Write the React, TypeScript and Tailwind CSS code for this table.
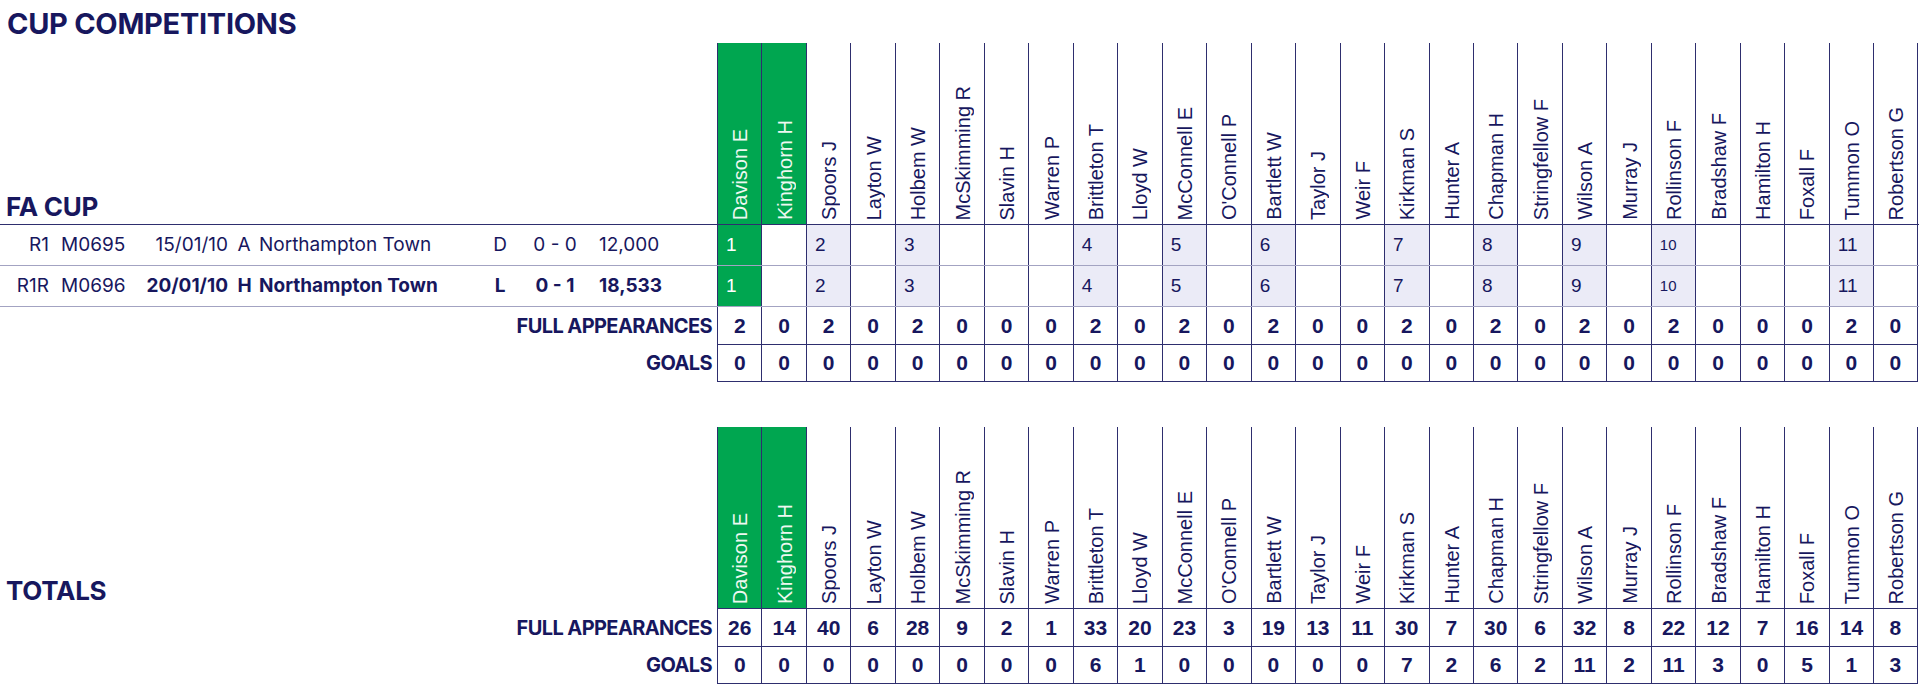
const PLAYERS = [
  'Davison E',
  'Kinghorn H',
  'Spoors J',
  'Layton W',
  'Holbem W',
  'McSkimming R',
  'Slavin H',
  'Warren P',
  'Brittleton T',
  'Lloyd W',
  'McConnell E',
  "O'Connell P",
  'Bartlett W',
  'Taylor J',
  'Weir F',
  'Kirkman S',
  'Hunter A',
  'Chapman H',
  'Stringfellow F',
  'Wilson A',
  'Murray J',
  'Rollinson F',
  'Bradshaw F',
  'Hamilton H',
  'Foxall F',
  'Tummon O',
  'Robertson G',
];

// column index -> shirt number, same line-up in both ties
const SHIRTS: Record<number, number> = { 0: 1, 2: 2, 4: 3, 8: 4, 10: 5, 12: 6, 15: 7, 17: 8, 19: 9, 21: 10, 25: 11 };

const CUP_APPS = [2, 0, 2, 0, 2, 0, 0, 0, 2, 0, 2, 0, 2, 0, 0, 2, 0, 2, 0, 2, 0, 2, 0, 0, 0, 2, 0];
const CUP_GOALS = PLAYERS.map(() => 0);
const TOTAL_APPS = [26, 14, 40, 6, 28, 9, 2, 1, 33, 20, 23, 3, 19, 13, 11, 30, 7, 30, 6, 32, 8, 22, 12, 7, 16, 14, 8];
const TOTAL_GOALS = [0, 0, 0, 0, 0, 0, 0, 0, 6, 1, 0, 0, 0, 0, 0, 7, 2, 6, 2, 11, 2, 11, 3, 0, 5, 1, 3];

interface Match {
  round: string;
  code: string;
  date: string;
  venue: string;
  opponent: string;
  result: string;
  score: string;
  crowd: string;
  bold?: boolean;
}

const MATCHES: Match[] = [
  { round: 'R1', code: 'M0695', date: '15/01/10', venue: 'A', opponent: 'Northampton Town', result: 'D', score: '0 - 0', crowd: '12,000' },
  { round: 'R1R', code: 'M0696', date: '20/01/10', venue: 'H', opponent: 'Northampton Town', result: 'L', score: '0 - 1', crowd: '18,533', bold: true },
];

function HeaderRow({ label, fullLine }: { label: string; fullLine: boolean }) {
  return (
    <div className={fullLine ? 'flex h-[182px] border-b border-[#2e2e6e]' : 'flex h-[182px]'}>
      <div className={fullLine ? 'w-[717px] shrink-0 flex items-end pl-[6px] pb-[4px]' : 'w-[717px] shrink-0 flex items-end pl-[6px] pb-[5px]'}>
        <h2 className="font-['Inter',sans-serif] font-bold text-[26px] leading-[26px] tracking-[-0.01em]">{label}</h2>
      </div>
      {PLAYERS.map((name, i) => (
        <div
          key={name}
          className={[
            'w-[44.48px] shrink-0 border-l border-[#2e2e6e] flex flex-col items-center justify-end pb-[4px] pl-[1px]',
            i < 2 ? 'bg-[#00a650] text-[#eef8f1]' : '',
            i === PLAYERS.length - 1 ? 'border-r' : '',
            fullLine ? '' : 'border-b',
          ].join(' ')}
        >
          <span className="[writing-mode:vertical-rl] rotate-180 whitespace-nowrap font-['Liberation_Sans',Arial,sans-serif] text-[20px] leading-[20px]">
            {name}
          </span>
        </div>
      ))}
    </div>
  );
}

function MatchRow({ m }: { m: Match }) {
  const b = m.bold ? 'font-bold' : '';
  return (
    <div className="flex h-[41px] border-b border-[#a3a3c2]">
      <div className="w-[717px] shrink-0 flex items-center font-['Inter',sans-serif] text-[19px] whitespace-nowrap">
        <span className="w-[49px] text-right">{m.round}</span>
        <span className="ml-[12px] w-[66px]">{m.code}</span>
        <span className={`w-[101px] text-right ${b}`}>{m.date}</span>
        <span className={`ml-[9.5px] w-[21.5px] ${b}`}>{m.venue}</span>
        <span className={`w-[220px] ${b}`}>{m.opponent}</span>
        <span className={`w-[42px] text-center ${b}`}>{m.result}</span>
        <span className={`w-[68px] text-center ${b}`}>{m.score}</span>
        <span className={`ml-[10px] ${b}`}>{m.crowd}</span>
      </div>
      {PLAYERS.map((name, i) => {
        const n = SHIRTS[i];
        return (
          <div
            key={name}
            className={[
              'w-[44.48px] shrink-0 border-l border-[#2e2e6e] flex items-center pl-[8px] font-["Liberation_Sans",Arial,sans-serif]',
              i === 0 ? 'bg-[#00a650] text-white' : n ? 'bg-[#ebebf7]' : 'bg-white',
              i === PLAYERS.length - 1 ? 'border-r' : '',
              n === 10 ? 'text-[15px]' : 'text-[19px]',
            ].join(' ')}
          >
            {n}
          </div>
        );
      })}
    </div>
  );
}

function TotalRow({ label, values }: { label: string; values: number[] }) {
  return (
    <div className="flex h-[37.5px]">
      <div className="w-[717px] shrink-0 flex items-center justify-end pr-[5px] font-['Inter',sans-serif] font-bold text-[20px] tracking-[-0.03em]">
        {label}
      </div>
      {values.map((v, i) => (
        <div
          key={PLAYERS[i]}
          className={
            i === values.length - 1
              ? 'w-[44.48px] shrink-0 border-l border-r border-b border-[#2e2e6e] flex items-center justify-center font-bold text-[21px] font-["Liberation_Sans",Arial,sans-serif]'
              : 'w-[44.48px] shrink-0 border-l border-b border-[#2e2e6e] flex items-center justify-center font-bold text-[21px] font-["Liberation_Sans",Arial,sans-serif]'
          }
        >
          {v}
        </div>
      ))}
    </div>
  );
}

export default function App() {
  return (
    <div className="w-[1919px] h-[684px] overflow-hidden bg-white text-[#17175e]">
      <div className="h-[43px] pt-[9px] pl-[7px]">
        <h1 className="font-['Inter',sans-serif] font-bold text-[29px] leading-[29px] tracking-[-0.01em]">CUP COMPETITIONS</h1>
      </div>

      <section>
        <HeaderRow label="FA CUP" fullLine />
        {MATCHES.map((m) => (
          <MatchRow key={m.code} m={m} />
        ))}
        <TotalRow label="FULL APPEARANCES" values={CUP_APPS} />
        <TotalRow label="GOALS" values={CUP_GOALS} />
      </section>

      <section className="mt-[45px]">
        <HeaderRow label="TOTALS" fullLine={false} />
        <TotalRow label="FULL APPEARANCES" values={TOTAL_APPS} />
        <TotalRow label="GOALS" values={TOTAL_GOALS} />
      </section>
    </div>
  );
}
